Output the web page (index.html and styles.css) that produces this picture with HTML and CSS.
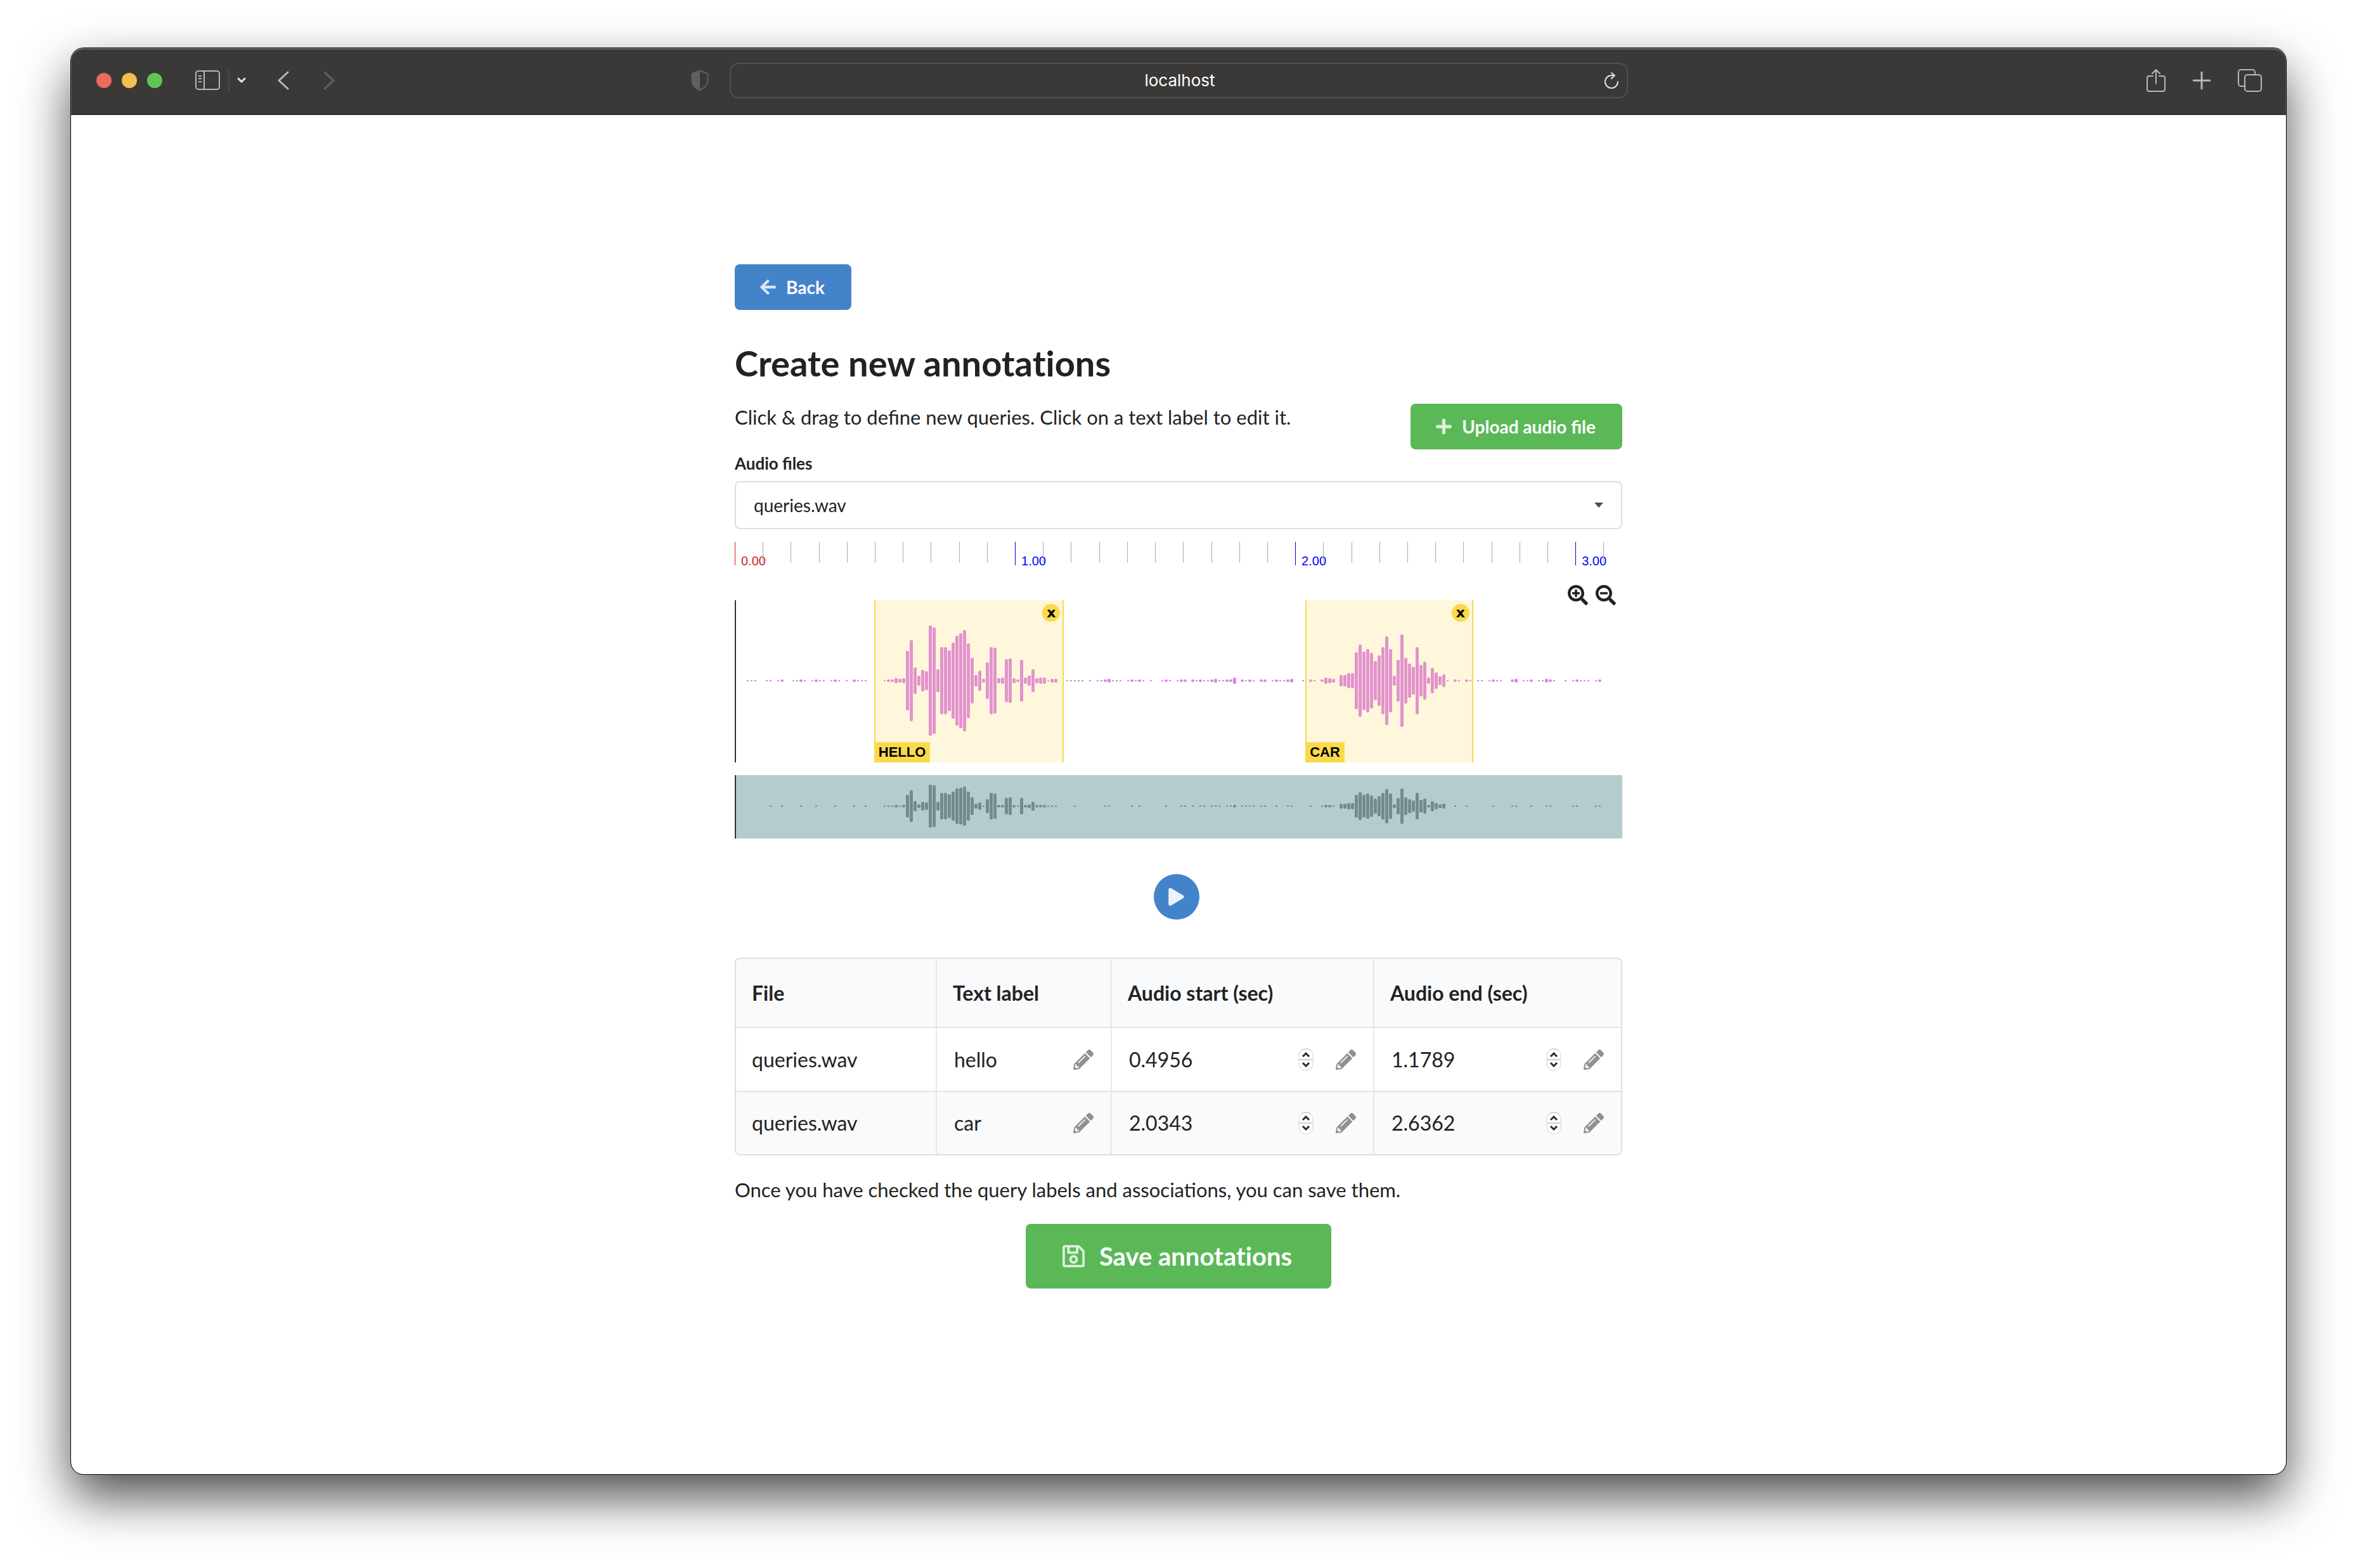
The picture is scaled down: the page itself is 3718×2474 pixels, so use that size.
FILE: index.html
```html
<!DOCTYPE html>
<html lang="en">
<head>
<meta charset="utf-8">
<title>Create new annotations</title>
<link rel="stylesheet" href="styles.css">
</head>
<body>
<svg class="defs" aria-hidden="true">
  <symbol id="pencil" viewBox="0 0 512 512"><path d="M497.9 142.1l-46.1 46.1c-4.7 4.7-12.3 4.7-17 0l-111-111c-4.7-4.7-4.7-12.3 0-17l46.1-46.1c18.7-18.7 49.1-18.7 67.9 0l60.1 60.1c18.8 18.7 18.8 49.1 0 67.9zM284.2 99.8L21.6 362.4.4 483.9c-2.9 16.4 11.4 30.6 27.8 27.8l121.5-21.3 262.6-262.6c4.7-4.7 4.7-12.3 0-17l-111-111c-4.8-4.7-12.4-4.7-17.1 0zM124.1 339.9c-5.5-5.5-5.5-14.3 0-19.8l154-154c5.5-5.5 14.3-5.5 19.8 0s5.5 14.3 0 19.8l-154 154c-5.5 5.5-14.3 5.5-19.8 0zM88 424h48v36.3l-64.5 11.3-31.1-31.1L51.7 376H88v48z"/></symbol>
  <symbol id="stepper" viewBox="0 0 24 36">
    <rect x="1" y="1" width="22" height="34" rx="10" fill="#fff" stroke="#d4d4d4" stroke-width="1"/>
    <path d="M5 3Q12 -1 19 3" fill="none" stroke="#bdbdbd" stroke-width="1"/>
    <path d="M1 18h22" stroke="#d2d2d2" stroke-width="2"/>
    <path d="M7 13l5-5 5 5M7 23l5 5 5-5" fill="none" stroke="#2b2b2b" stroke-width="3"/>
  </symbol>
</svg>

<div class="window">
  <header class="toolbar">
    <div class="toolbar-side">
      <div class="lights"><span class="light red"></span><span class="light yellow"></span><span class="light green"></span></div>
      <div class="sidebar-tools">
        <button class="tool" aria-label="Sidebar"><svg width="40" height="32" viewBox="0 0 40 32" fill="none" stroke="#b9b8b7" stroke-width="2"><rect x="1" y="1" width="37" height="29" rx="4"/><path d="M14 1v29M5 9h5M5 13h5M5 18h5"/></svg></button>
        <span class="divider"></span>
        <button class="tool" aria-label="Tab groups"><svg width="14" height="10" viewBox="0 0 14 10" fill="none" stroke="#e8e8e8" stroke-width="3" stroke-linecap="round" stroke-linejoin="round"><path d="M2 2l5 5 5-5"/></svg></button>
      </div>
      <div class="history">
        <button class="tool" aria-label="Back"><svg width="18" height="30" viewBox="0 0 18 30" fill="none" stroke="#b9b8b7" stroke-width="3" stroke-linecap="round" stroke-linejoin="round"><path d="M16 2L2 15l14 13"/></svg></button>
        <button class="tool" aria-label="Forward"><svg width="18" height="30" viewBox="0 0 18 30" fill="none" stroke="#646261" stroke-width="3" stroke-linecap="round" stroke-linejoin="round"><path d="M2 2l14 13L2 28"/></svg></button>
      </div>
      <button class="tool shield" aria-label="Privacy report"><svg width="28" height="34" viewBox="0 0 28 34"><path d="M14 1.500L3.500 5.500Q1.500 6.300 1.500 8.500V18Q1.500 26 14 32.500Q26.500 26 26.500 18V8.500Q26.500 6.300 24.500 5.500Z" fill="none" stroke="#636160" stroke-width="2"/><path d="M14 1.500L3.500 5.500Q1.500 6.300 1.500 8.500V18Q1.500 26 14 32.500Z" fill="#636160"/></svg></button>
    </div>
    <div class="address">
      <input class="address-input" type="text" value="localhost" aria-label="Address">
      <button class="tool reload" aria-label="Reload"><svg width="24" height="27" viewBox="0 0 24 27" fill="none" stroke="#e3e3e2" stroke-width="2" stroke-linecap="round" stroke-linejoin="round"><path d="M22 15A10 10 0 1 1 12 5h5M12 1l5 4-5 5"/></svg></button>
    </div>
    <div class="toolbar-actions">
      <button class="tool" aria-label="Share"><svg width="30" height="38" viewBox="0 0 30 38" fill="none" stroke="#b9b8b7" stroke-width="2" stroke-linecap="round" stroke-linejoin="round"><path d="M10 12H4a3 3 0 0 0-3 3v18a3 3 0 0 0 3 3h22a3 3 0 0 0 3-3V15a3 3 0 0 0-3-3h-6M15 24V2M9 8l6-6 6 6"/></svg></button>
      <button class="tool" aria-label="New tab"><svg width="28" height="28" viewBox="0 0 28 28" fill="none" stroke="#b9b8b7" stroke-width="3" stroke-linecap="round"><path d="M14 1v26M1 14h26"/></svg></button>
      <button class="tool" aria-label="Tab overview"><svg width="38" height="36" viewBox="0 0 38 36" fill="none" stroke="#b9b8b7" stroke-width="2"><rect x="11" y="9" width="26" height="26" rx="4"/><path d="M11 27H5a4 4 0 0 1-4-4V5a4 4 0 0 1 4-4h18a4 4 0 0 1 4 4v4"/></svg></button>
    </div>
  </header>

  <main class="page">
    <button class="button primary"><svg class="icon" viewBox="0 0 448 512"><path d="M257.500 445.100l-22.200 22.200c-9.400 9.400-24.600 9.400-33.900 0L7 273c-9.400-9.400-9.400-24.600 0-33.900L201.400 44.700c9.400-9.400 24.600-9.400 33.900 0l22.200 22.200c9.500 9.500 9.300 25-.4 34.300L136.600 216H424c13.300 0 24 10.700 24 24v32c0 13.300-10.700 24-24 24H136.600l120.500 114.800c9.800 9.300 10 24.800.4 34.300z"/></svg>Back</button>
    <h1 class="title">Create new annotations</h1>
    <div class="intro">
      <p class="text">Click &amp; drag to define new queries. Click on a text label to edit it.</p>
      <button class="button positive"><svg class="icon" viewBox="0 0 448 512"><path d="M416 208H272V64c0-17.670-14.330-32-32-32h-32c-17.670 0-32 14.330-32 32v144H32c-17.670 0-32 14.330-32 32v32c0 17.670 14.330 32 32 32h144v144c0 17.670 14.330 32 32 32h32c17.670 0 32-14.330 32-32V304h144c17.670 0 32-14.330 32-32v-32c0-17.670-14.330-32-32-32z"/></svg>Upload audio file</button>
    </div>
    <label class="field-label" for="audio-file">Audio files</label>
    <div class="select">
      <select id="audio-file"><option>queries.wav</option></select>
      <svg class="caret" width="14" height="8" viewBox="0 0 14 8"><path d="M0 0h14L7 8z" fill="#4d4d4d"/></svg>
    </div>

    <svg class="timeline" id="timeline" role="img" aria-label="Timeline in seconds"></svg>
    <div class="zoom-tools">
      <button class="tool" aria-label="Zoom in"><svg width="32" height="32" viewBox="0 0 512 512"><path fill="#222" d="M304 192v32c0 6.600-5.400 12-12 12h-56v56c0 6.600-5.400 12-12 12h-32c-6.600 0-12-5.400-12-12v-56h-56c-6.600 0-12-5.400-12-12v-32c0-6.600 5.400-12 12-12h56v-56c0-6.600 5.400-12 12-12h32c6.600 0 12 5.400 12 12v56h56c6.600 0 12 5.400 12 12zm201 284.700L476.700 505c-9.400 9.400-24.600 9.400-33.900 0L343 405.300c-4.500-4.500-7-10.600-7-17V372c-35.300 27.600-79.700 44-128 44C93.100 416 0 322.900 0 208S93.100 0 208 0s208 93.100 208 208c0 48.300-16.400 92.700-44 128h16.300c6.400 0 12.500 2.500 17 7l99.700 99.700c9.300 9.400 9.300 24.600 0 34zM344 208c0-75.200-60.800-136-136-136S72 132.800 72 208s60.800 136 136 136 136-60.800 136-136z"/></svg></button>
      <button class="tool" aria-label="Zoom out"><svg width="32" height="32" viewBox="0 0 512 512"><path fill="#222" d="M304 192v32c0 6.600-5.400 12-12 12H124c-6.600 0-12-5.400-12-12v-32c0-6.600 5.400-12 12-12h168c6.600 0 12 5.400 12 12zm201 284.700L476.700 505c-9.400 9.400-24.600 9.400-33.900 0L343 405.300c-4.500-4.500-7-10.600-7-17V372c-35.300 27.600-79.700 44-128 44C93.100 416 0 322.900 0 208S93.100 0 208 0s208 93.100 208 208c0 48.300-16.400 92.700-44 128h16.300c6.400 0 12.500 2.500 17 7l99.700 99.700c9.300 9.400 9.300 24.600 0 34zM344 208c0-75.200-60.800-136-136-136S72 132.800 72 208s60.800 136 136 136 136-60.800 136-136z"/></svg></button>
    </div>
    <div class="wave">
      <svg id="waveform" class="bars" viewBox="0 0 1400 256" preserveAspectRatio="none" role="img" aria-label="Waveform"></svg>
      <div class="region" style="left:15.700%;width:21.400%"><button class="region-close" aria-label="Remove hello">x</button><span class="region-label">HELLO</span></div>
      <div class="region" style="left:64.300%;width:18.900%"><button class="region-close" aria-label="Remove car">x</button><span class="region-label">CAR</span></div>
    </div>
    <div class="minimap">
      <svg id="minimap" class="bars" viewBox="0 0 1400 100" preserveAspectRatio="none" role="img" aria-label="Waveform overview"></svg>
    </div>
    <div class="player"><button class="play" aria-label="Play"><svg width="25" height="28" viewBox="0 0 448 512"><path fill="#eaf2fb" d="M424.400 214.700L72.400 6.600C43.800-10.300 0 6.100 0 47.900V464c0 37.500 40.700 60.100 72.400 41.300l352-208c31.400-18.500 31.500-64.100 0-82.600z"/></svg></button></div>

    <table class="table">
      <colgroup><col class="col-file"><col class="col-label"><col class="col-start"><col></colgroup>
      <thead><tr><th>File</th><th>Text label</th><th>Audio start (sec)</th><th>Audio end (sec)</th></tr></thead>
      <tbody>
        <tr>
          <td>queries.wav</td>
          <td><div class="cell"><input type="text" value="hello" aria-label="Text label, row 1"><svg class="pencil"><use href="#pencil"/></svg></div></td>
          <td><div class="cell"><input type="number" step="any" value="0.4956" aria-label="Audio start, row 1"><svg class="stepper"><use href="#stepper"/></svg><svg class="pencil"><use href="#pencil"/></svg></div></td>
          <td><div class="cell"><input type="number" step="any" value="1.1789" aria-label="Audio end, row 1"><svg class="stepper"><use href="#stepper"/></svg><svg class="pencil"><use href="#pencil"/></svg></div></td>
        </tr>
        <tr>
          <td>queries.wav</td>
          <td><div class="cell"><input type="text" value="car" aria-label="Text label, row 2"><svg class="pencil"><use href="#pencil"/></svg></div></td>
          <td><div class="cell"><input type="number" step="any" value="2.0343" aria-label="Audio start, row 2"><svg class="stepper"><use href="#stepper"/></svg><svg class="pencil"><use href="#pencil"/></svg></div></td>
          <td><div class="cell"><input type="number" step="any" value="2.6362" aria-label="Audio end, row 2"><svg class="stepper"><use href="#stepper"/></svg><svg class="pencil"><use href="#pencil"/></svg></div></td>
        </tr>
      </tbody>
    </table>
    <p class="text outro">Once you have checked the query labels and associations, you can save them.</p>
    <button class="button positive huge"><svg class="icon" viewBox="0 0 448 512"><path d="M433.941 129.941l-83.882-83.882A48 48 0 0 0 316.118 32H48C21.490 32 0 53.490 0 80v352c0 26.510 21.490 48 48 48h352c26.510 0 48-21.490 48-48V163.882a48 48 0 0 0-14.059-33.941zM272 80v80H144V80h128zm122 352H54a6 6 0 0 1-6-6V86a6 6 0 0 1 6-6h42v104c0 13.255 10.745 24 24 24h176c13.255 0 24-10.745 24-24V83.882l78.243 78.243a6 6 0 0 1 1.757 4.243V426a6 6 0 0 1-6 6zM224 232c-48.523 0-88 39.477-88 88s39.477 88 88 88 88-39.477 88-88-39.477-88-88-88zm0 128c-22.056 0-40-17.944-40-40s17.944-40 40-40 40 17.944 40 40-17.944 40-40 40z"/></svg>Save annotations</button>
  </main>
</div>
<script src="waveform.js"></script>
</body>
</html>
```

FILE: styles.css
```css
* { box-sizing: border-box; }

body {
  margin: 0;
  min-height: 100vh;
  padding: 76px 112px 148px;
  display: flex;
  background: #fff;
  color: #222;
  font: 32px/42px Lato, "Open Sans", sans-serif;
}

button, input, select { font: inherit; color: inherit; }
button { border: 0; padding: 0; background: none; cursor: pointer; }
svg { display: block; flex: none; }
.defs { position: absolute; width: 0; height: 0; }

/* Browser window */
.window {
  flex: 1;
  min-width: 0;
  border-radius: 20px;
  background: #fff;
  box-shadow: 0 0 0 1px #000, 0 36px 80px rgba(0, 0, 0, .7);
}

.toolbar {
  display: grid;
  grid-template-columns: 1fr minmax(0, 1417px) 1fr;
  align-items: center;
  height: 105px;
  padding: 0 38px 2px;
  border-radius: 20px 20px 0 0;
  border-bottom: 1px solid #000;
  background: #3b3937;
  box-shadow: inset 0 2px 0 #6d6c69, inset 1px 0 0 #62605e, inset -1px 0 0 #62605e, 0 1px 0 #bbb;
}

.tool { display: block; }
.toolbar-side { display: flex; align-items: center; }
.lights { display: flex; gap: 16px; margin-left: 2px; }
.light { width: 24px; height: 24px; border-radius: 50%; }
.red { background: #ed6a5e; }
.yellow { background: #f5bf4f; }
.green { background: #61c554; }
.sidebar-tools { display: flex; align-items: center; gap: 12px; margin-left: 52px; }
.divider { width: 2px; height: 36px; background: #4c4a49; }
.history { display: flex; gap: 54px; margin-left: 50px; }
.shield { margin-left: auto; margin-right: 33px; }

.address {
  display: flex;
  align-items: center;
  height: 56px;
  padding: 0 12px 0 40px;
  border: 2px solid #52504e;
  border-radius: 14px;
}
.address-input {
  flex: 1;
  min-width: 0;
  padding: 0;
  border: 0;
  background: none;
  color: #fff;
  text-align: center;
  font: 26px/32px Inter, Roboto, sans-serif;
}
.toolbar-actions { display: flex; align-items: center; justify-content: flex-end; gap: 43px; }

/* Page */
.page {
  display: flex;
  flex-direction: column;
  align-items: flex-start;
  width: 100%;
  max-width: 1400px;
  margin: 0 auto;
  padding: 236px 0 240px;
}

.button {
  display: inline-flex;
  align-items: center;
  padding: 22px 42px 22px 36px;
  border-radius: 8px;
  color: #fff;
  font-size: 28px;
  font-weight: 700;
  line-height: 28px;
}
.button .icon { width: 33px; height: 28px; margin-right: 12px; fill: #fff; opacity: .8; }
.primary { background: #4383ca; }
.positive { background: #5ab857; }
.huge {
  align-self: center;
  padding: 31px 62px 31px 52px;
  font-size: 40px;
  line-height: 40px;
  font-variant-ligatures: none;
}
.huge .icon { width: 47px; height: 40px; margin-right: 17px; }

.title {
  margin: 48px 0 28px;
  font-size: 56px;
  line-height: 72px;
  font-weight: 700;
  font-variant-ligatures: none;
}
.text { margin: 0; font-size: 31px; }
.intro { display: flex; justify-content: space-between; align-items: flex-start; width: 100%; }

.field-label { margin: 4px 0 10px; font-size: 26px; line-height: 36px; font-weight: 700; }
.select {
  display: grid;
  grid-template-columns: 1fr 14px;
  align-items: center;
  width: 100%;
  height: 76px;
  padding-right: 28px;
  border: 2px solid #dedede;
  border-radius: 8px;
}
.select select {
  grid-area: 1 / 1 / 2 / 3;
  width: 100%;
  height: 72px;
  padding: 0 28px;
  border: 0;
  background: none;
  appearance: none;
  font-size: 28px;
}
.select .caret { grid-area: 1 / 2; pointer-events: none; }

/* Audio editor */
.timeline { width: 100%; height: 48px; margin-top: 20px; font: 20px "Liberation Sans", Arial, sans-serif; }
.tick { fill: #aaa; }
.tick-major { fill: #00d; }
.tick-label { fill: #00f; }
.tick-origin { fill: #d01f1f; }

.zoom-tools { display: flex; align-self: flex-end; gap: 12px; margin: 20px 10px -8px 0; }

.wave { position: relative; width: 100%; height: 256px; box-shadow: inset 2px 0 0 #333; }
.minimap { width: 100%; height: 100px; margin-top: 20px; background: #b5cccd; box-shadow: inset 2px 0 0 #333; }
.bars { width: 100%; height: 100%; }
#waveform { fill: #dd82ee; }
#minimap { fill: #728b8b; }

.region {
  position: absolute;
  top: 0;
  bottom: 0;
  border: solid #fad94b;
  border-width: 0 2px;
  background: rgba(250, 217, 75, .2);
}
.region-close {
  position: absolute;
  top: 6px;
  right: 4px;
  width: 28px;
  height: 28px;
  border-radius: 50%;
  background: #fad94b;
  color: #000;
  font: bold 22px/24px "DejaVu Sans", Verdana, sans-serif;
}
.region-label {
  position: absolute;
  left: -2px;
  bottom: 0;
  padding: 0 7px;
  background: #fad94b;
  color: #000;
  font: bold 22px/32px "Liberation Sans", Arial, sans-serif;
}

.player { display: flex; justify-content: center; width: 100%; margin: 56px 0 60px; padding-right: 7px; }
.play {
  display: flex;
  align-items: center;
  justify-content: center;
  width: 72px;
  height: 72px;
  border-radius: 50%;
  background: #4383ca;
}

/* Annotations table */
.table {
  table-layout: fixed;
  width: 100%;
  border: 2px solid #dedfdf;
  border-radius: 8px;
  border-spacing: 0;
  overflow: hidden;
}
.col-file { width: 315px; }
.col-label { width: 276px; }
.col-start { width: 414px; }
.table th, .table td { padding: 0 27px 0 25px; text-align: left; border-left: 2px solid #e6e7e8; }
.table th:first-child, .table td:first-child { border-left: 0; }
.table th { height: 109px; background: #f9fafb; border-bottom: 2px solid #e2e4e6; }
.table td { height: 99px; }
.table tr + tr td { height: 100px; background: #fafafb; border-top: 2px solid #e4e4e5; }

.cell { display: flex; align-items: center; }
.cell input {
  flex: 1;
  min-width: 0;
  padding: 0 0 0 2px;
  border: 0;
  background: none;
  appearance: textfield;
}
.cell input::-webkit-inner-spin-button { appearance: none; margin: 0; }
.stepper { width: 24px; height: 36px; margin-right: 35px; }
.pencil { width: 32px; height: 32px; fill: #909090; }

.outro { margin: 33px 0; }
```

FILE: waveform.js
```js
// Bar heights in pixels, keyed by the runs of consecutive bar indexes.
const runs = {
  3: [2, 2, 2], 8: [2, 2], 11: [2, 4], 15: [2, 2, 4, 2], 20: [2, 4, 2, 2],
  25: [2, 4, 2], 29: [2], 31: [4, 2, 2, 2], 39: [2, 4, 4, 8, 6, 8],
  45: [94, 128, 42, 16, 34, 30, 174, 168, 36, 106, 106, 96, 120, 142, 150, 160, 118, 72, 18, 32, 6, 58, 106, 104, 8, 10, 68, 70, 8, 4, 66, 10, 16, 36, 8, 10, 10, 2, 6, 6],
  87: [2, 2, 2, 2, 2], 93: [2], 95: [2, 2, 4, 6, 2, 2, 2], 103: [2, 4, 2, 4, 2], 109: [2],
  112: [2, 4, 2], 116: [2, 4, 4], 120: [4, 2, 4, 2, 2, 4, 6, 2, 2, 4, 4, 10],
  133: [4, 2, 4, 2], 138: [4, 4], 141: [2, 4, 2, 2, 4, 6], 149: [2], 151: [4, 2],
  154: [4, 10, 8, 6], 159: [18, 18, 24, 24, 90, 114, 92, 100, 88, 62, 80, 106, 140, 100, 16, 66, 146, 72, 54, 44, 106, 50, 60, 10, 40, 26, 14, 20, 2],
  189: [4, 2], 192: [4, 2], 195: [2, 2], 198: [2, 4, 2, 2], 204: [4, 6], 207: [2, 2, 4],
  211: [2, 2, 6, 4, 2], 218: [2], 220: [2, 4, 2, 2, 2], 226: [2, 4]
};
// Quiet bars that still show in the overview.
const faint = new Set([9, 34, 39, 82, 89, 123, 127, 134, 136, 220, 226]);

const NS = "http://www.w3.org/2000/svg";
function add(parent, name, attrs, text) {
  const el = document.createElementNS(NS, name);
  for (const key in attrs) el.setAttribute(key, attrs[key]);
  if (text) el.textContent = text;
  parent.appendChild(el);
}

// A two-pixel bar is drawn as a narrow dot, a taller one as a rounded line.
function bar(parent, index, height, middle) {
  const dot = height <= 2;
  add(parent, "rect", {
    x: index * 6 + (dot ? 1 : 0), y: middle - height / 2,
    width: dot ? 3 : 5, height, rx: dot ? 0 : 2
  });
}

const waveform = document.getElementById("waveform");
const minimap = document.getElementById("minimap");
for (const start in runs) {
  runs[start].forEach((height, offset) => {
    const index = Number(start) + offset;
    bar(waveform, index, height, 127);
    if (height >= 4 || faint.has(index)) {
      bar(minimap, index, Math.max(2, Math.round(height * 0.195) * 2), 49);
    }
  });
}

const timeline = document.getElementById("timeline");
const duration = 3.167;
for (let tenth = 0; tenth <= 31; tenth++) {
  const x = (tenth * 10 / duration).toFixed(3) + "%";
  const major = tenth % 10 === 0;
  const origin = tenth === 0 ? " tick-origin" : "";
  add(timeline, "rect", {
    class: (major ? "tick-major" : "tick") + origin,
    x, y: 0, width: 1, height: major ? 37 : 33, "shape-rendering": "crispEdges"
  });
  if (major) {
    add(timeline, "text", { class: "tick-label" + origin, x, dx: 10, y: 37 }, (tenth / 10).toFixed(2));
  }
}
```
